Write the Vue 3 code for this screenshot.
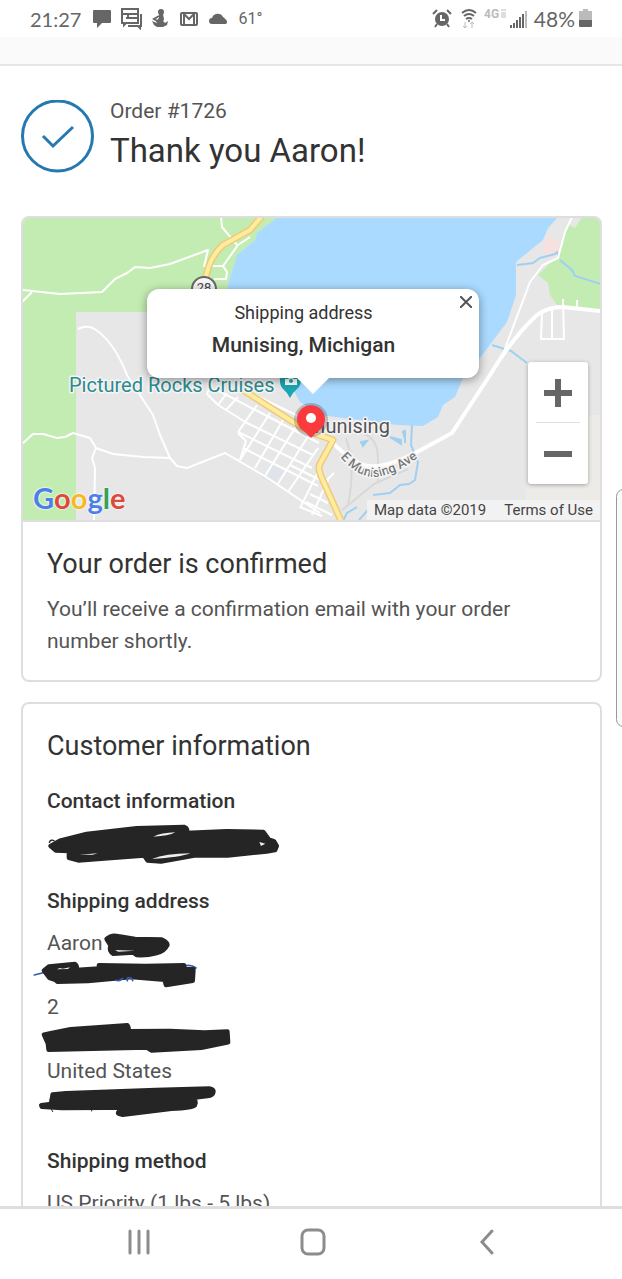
<script setup>
import {ref} from "vue";

const order = {
  number: 1726,
  name: 'Aaron',
  city: 'Munising, Michigan',
  method: 'US Priority (1 lbs - 5 lbs)',
}

const showPopup = ref(true)
</script>

<template>
  <div class="phone">
    <header class="status">
      <div class="status_group">
        <span class="status_time">21:27</span>
        <svg width="18" height="20" viewBox="0 0 18 20" fill="#666">
          <path d="M1 1h16q1 0 1 1v11q0 1-1 1H9l-5 5v-5H1q-1 0-1-1V2q0-1 1-1z"/>
        </svg>
        <svg width="21" height="22" viewBox="0 0 21 22" fill="none" stroke="#666" stroke-width="2">
          <path d="M1 1h16v14H5l-2 2v-2H1zM1 6h16M7 6v4M5 10h12"/>
          <path d="M20 6v12h-1v2l-2-2H7"/>
        </svg>
        <svg width="18" height="20" viewBox="0 0 18 20" fill="#666">
          <circle cx="9" cy="3" r="3"/>
          <path d="M7 5h4l1 5-2 6H6l-2-4 3-3z"/>
          <path d="M7 7l-5 3 5 3" fill="none" stroke="#666" stroke-width="2"/>
          <path d="M0 12l5 2h5l1-2 2 2 3-2-1 4-4 2H5l-3-2z"/>
        </svg>
        <svg width="18" height="20" viewBox="0 0 18 20" fill="none" stroke="#666" stroke-width="2">
          <rect x="1" y="4" width="16" height="12" rx="1"/>
          <path d="M4 16V5l5 5 5-5v11" stroke-width="2"/>
        </svg>
        <svg width="20" height="20" viewBox="0 0 20 20" fill="#666">
          <path d="M4 15a3 3 0 0 1 0-6 6 6 0 0 1 11-1q2 1 2 2a3 3 0 0 1 1 5z"/>
        </svg>
        <span class="status_temp">61°</span>
      </div>
      <div class="status_group status_right">
        <svg width="24" height="22" viewBox="0 0 24 22" fill="#666">
          <circle cx="10" cy="11" r="7"/>
          <path d="M1 6l4-4M15 2l4 4M5 16l-2 3M15 16l2 3" stroke="#666" stroke-width="2"/>
          <path d="M9 7v5h4" fill="none" stroke="#fff" stroke-width="2"/>
        </svg>
        <svg width="20" height="22" viewBox="0 0 20 22" fill="none" stroke="#666" stroke-width="2">
          <path d="M2 5q7-6 14 0M4 8q5-4 10 0M6 11q3-2 6 0"/>
          <circle cx="9" cy="13" r="1" fill="#666" stroke="none"/>
          <path d="M5 14v6M3 18l2 2 2-2M12 20v-6M10 16l2-2 2 2" stroke="#bbb" stroke-width="1"/>
        </svg>
        <svg width="22" height="22" viewBox="0 0 22 22" fill="#bbb">
          <text x="0" y="10" font-size="12" font-weight="700">4G</text>
          <path d="M17 2h5M17 5h5M17 7h5M17 9h5" stroke="#bbb"/>
        </svg>
        <svg width="20" height="22" viewBox="0 0 20 22" fill="#666">
          <path d="M0 17h2v3H0zM3 15h2v5H3zM6 12h2v8H6zM9 9h2v11H9zM12 6h2v14h-2z"/>
          <path d="M15 3h2v17h-2z" fill="#bbb"/>
        </svg>
        <span class="status_battery">48%</span>
        <svg width="13" height="20" viewBox="0 0 13 20">
          <path d="M4 0h5v2h4v9H0V2h4z" fill="#bbb"/>
          <path d="M0 11h13v6q0 1-1 1H1q-1 0-1-1z" fill="#666"/>
        </svg>
      </div>
    </header>

    <main class="page">
      <div class="strip"></div>
      <div class="greeting">
        <svg class="greeting_icon" viewBox="0 0 73 73" fill="none" stroke="#2678b0" stroke-width="3">
          <circle cx="36.5" cy="36" r="35"/>
          <path d="M22 36l10 10 20-19"/>
        </svg>
        <div>
          <div class="greeting_order">Order #{{ order.number }}</div>
          <h1 class="greeting_title">Thank you {{ order.name }}!</h1>
        </div>
      </div>

      <section class="card">
        <div class="map">
          <svg class="map_canvas" viewBox="23 218 577 302" preserveAspectRatio="xMidYMid slice">
            <rect x="-300" y="100" width="1300" height="500" fill="#e7e7e7"/>
            <path d="M-300 100H300V217L278 217 257 233 255 240 237 255 230 278 227 288 240 312H76V600H-300z" fill="#c3ecb2"/>
            <path d="M278 217L257 233 255 240 237 255 230 278 227 288 250 340 285 375 300 402 320 415 343 418 377 422 397 425 423 426 438 417 443 405 455 397 463 378 480 358 507 322 516 295 516 262 543 240 548 228 558 217z" fill="#aadaff"/>
            <path d="M573 217L565 232 558 258 550 263 538 275 548 283 550 295 557 305 603 312V217H582L575 228 568 224z" fill="#c3ecb2"/>
            <path d="M543 242l6-6 11 7-2 13-13 0z" fill="#f7e1df"/>
            <path d="M586 415h14v85h-74v-15h60z" fill="#edebe8"/>
            <path d="M262 478l8-14 15 8-8 14z" fill="#dfe4ea"/>

            <g fill="none" stroke="#9fd0f2" stroke-width="2">
              <path d="M517 265l16-2 7-5 15-4 2-2 1 3M560 260l12 10 3 6 26 8M492 345l19 6 16 12"/>
              <path d="M412 425l-1 20 7 17-3 18-6 4-9 1-10 8-17 2M357 507l-10 6-4 8M368 510l-9 10"/>
              <path d="M361 442l6-1-4 5zM390 437l11 3v4zM402 432l3-1v12" fill="#9fd0f2"/>
            </g>

            <g fill="none" stroke="#d8d8d8" stroke-width="2">
              <path d="M364 434q14 5 14 25v24M342 510l32-26 34-15M346 438q10 30 2 66"/>
            </g>

            <g fill="none" stroke="#fff" stroke-width="2" stroke-linejoin="round">
              <path d="M-10 290H23l37 4 42-2 13-13 12-6 8-6 15 1 20-4 38-14-4 17M32 292l-10 10M221 217l1 10 15 18M250 237l-12 8-15 21h-10M223 266l4 6-1 7h-12"/>
              <path d="M78 329q10-5 18 1 18 12 31 45l26 40 7 20 10 23"/>
              <path d="M-10 455L23 443l10-9h10l14 4 8-1 8-4 17 5 6 10 17 6 30 3 27 1 7 8 10 2 38-15 38 22 57 38M96 448l-4 10 3 10-1 53"/>
              <path d="M210 386l-3 8 11 11 29 18 66 32M215 389l104 54M238 432l74 36M243 448l75 38M238 433l8 8-6 19M290 465l34 17"/>
              <path d="M227 393l-9 12M238 397l-12 13M257 405l-19 27M270 413l-30 47M283 420l-28 48M295 428l-30 48M307 438l-30 47M318 448l-30 44M320 468l-20 40M300 507l22 9M334 473l-8 8M310 494l18 9M306 502l26 13M328 480l-16 35M255 395l45 22"/>
              <path d="M572 217l-7 15-7 26-15 7-13 17-23 61-3 9M542 312l-1 27h23l-1-40M552 309v30M577 300v8"/>
            </g>
            <path d="M601 311l-38-4q-15 0-26 8-25 23-47 60l-38 58-35 19q-42 22-60 10-14-8-27-22" fill="none" stroke="#fff" stroke-width="4"/>

            <g fill="none" stroke-linejoin="round">
              <path d="M262 216l-12 14-27 15q-15 13-18 38M235 385l58 37 20 11 20 7-12 22q-4 5 0 14l21 47" stroke="#efca78" stroke-width="7"/>
              <path d="M262 216l-12 14-27 15q-15 13-18 38M235 385l58 37 20 11 20 7-12 22q-4 5 0 14l21 47" stroke="#ffec9f" stroke-width="4"/>
            </g>

            <circle cx="204" cy="289" r="12" fill="#f5f5f5" stroke="#666" stroke-width="2"/>
            <text x="204" y="292" font-size="13" text-anchor="middle" fill="#444">28</text>

            <path d="M280 376h21q1 9-4 13-4 3-7 9-3-6-7-9-4-4-3-13z" fill="#1aa6b2"/>
            <path d="M285 379h3l2-2 4 2h3v6h-12z" fill="#fff"/>
            <circle cx="291" cy="381" r="2" fill="#1aa6b2"/>

            <g class="map_labels">
              <text x="69" y="392" font-size="20" fill="#2d8a8f">Pictured Rocks Cruises</text>
              <text x="308" y="433" font-size="20" fill="#555">Munising</text>
              <path id="ave" d="M340 457q22 25 42 19 18-4 38-20" fill="none" stroke="none"/>
              <text font-size="13" font-weight="500" fill="#777"><textPath href="#ave">E Munising Ave</textPath></text>
            </g>

            <ellipse cx="311" cy="420" rx="17" ry="17" fill="#000" opacity="0.2"/>
            <path d="M311 438q-4-5-10-9a14 14 0 1 1 20 0q-6 4-10 9z" fill="#fa3a3d"/>
            <circle cx="311" cy="418" r="5" fill="#fff"/>
          </svg>

          <a class="map_logo" href="#" aria-label="Google">
            <span class="blue">G</span><span class="red">o</span><span class="yellow">o</span><span class="blue">g</span><span class="green">l</span><span class="red">e</span>
          </a>

          <div v-if="showPopup" class="popup">
            <p class="popup_label">Shipping address</p>
            <p class="popup_city">{{ order.city }}</p>
            <button class="popup_close" aria-label="Close" @click="showPopup = false">
              <svg width="12" height="12" viewBox="0 0 12 12" stroke="#555" stroke-width="2">
                <path d="M0 0l12 12M12 0L0 12"/>
              </svg>
            </button>
          </div>

          <div class="zoom">
            <button class="zoom_button" aria-label="Zoom in">
              <svg width="28" height="28" viewBox="0 0 28 28" fill="#666"><path d="M11 0h6v11h11v6H17v11h-6V17H0v-6h11z"/></svg>
            </button>
            <button class="zoom_button" aria-label="Zoom out">
              <svg width="28" height="28" viewBox="0 0 28 28" fill="#666"><path d="M0 11h28v6H0z"/></svg>
            </button>
          </div>

          <div class="credits">
            <span>Map data ©2019</span>
            <a href="#">Terms of Use</a>
          </div>
        </div>
        <div class="card_body">
          <h2 class="card_title">Your order is confirmed</h2>
          <p class="card_text">You’ll receive a confirmation email with your order number shortly.</p>
        </div>
      </section>

      <section class="card">
        <div class="card_body">
          <h2 class="card_title">Customer information</h2>
          <div class="info">
            <h3 class="info_title">Contact information</h3>
            <div class="row">
              <svg class="scribble" viewBox="81 51 780 96">
                <path d="M88 97q5-10 14-5" fill="none" stroke-width="4"/>
                <path d="M92 108l28-16 80-20 150-17 142-4q14 5 6 18l122-5 110 2 16 22 16 6 8 14-5 12-25 4-117 12-100 0-100 18-40-3-10-14-10 0-110 8-78 6-28-8 0-20-40-2z"/>
                <path class="hole" d="M400 80q24-12 66-13-20 11-66 13zM178 134l55-4-15 4zM396 147q40-16 115-17-30 12-115 17zM718 96l18 5-13 7z"/>
              </svg>
            </div>
          </div>
          <div class="info">
            <h3 class="info_title">Shipping address</h3>
            <div class="row">
              {{ order.name }}
              <svg class="scribble" viewBox="81 354 780 96">
                <path d="M260 390q15-14 35-8l50 8 80 2q18 8 17 16-10 20-32 24-30 8-60 6l-10-8-60 4q-14-8-8-24z"/>
                <path class="hole" d="M285 423l60 2-50 3z"/>
              </svg>
            </div>
            <div class="row">
              <svg class="scribble" viewBox="81 450 780 96">
                <path class="blue_mark" d="M43 498l35-9M496 470q20-3 32 7"/>
                <path d="M72 485l15-12 78-8q8 6 4 18l68-4 0-10 140 2 115-2 2 12 26 0-2 34-80 13-4-16-100-8-130 12-92 2-6-6-18-6z"/>
                <path class="blue_mark" d="M288 514q10 4 20-6M322 515v-8q14-4 16 8"/>
                <path class="hole" d="M110 481l10-4 8 2 22-4-6 5z"/>
              </svg>
            </div>
            <div class="row">2</div>
            <div class="row">
              <svg class="scribble" viewBox="81 72 780 96">
                <path d="M72 107l20-4 60-12 170-12q6 8 2 18l125-1 105 5 68-3 2 32-80 16-150 8-14-9-294 7-2-18z"/>
              </svg>
            </div>
            <div class="row">United States</div>
            <div class="row">
              <svg class="scribble" viewBox="81 264 780 96">
                <path d="M98 287l40-4 270-10 160-4q14 2 12 10-2 10-18 12l-48 6q18 6 10 22-6 8-70 10l-146 18q-18-2-12-8l88-14-258 2-60-4-2-4 30-4z"/>
                <path d="M96 288q-16 25 2 50M215 326v10" fill="none" stroke-width="3"/>
              </svg>
            </div>
          </div>
          <div class="info">
            <h3 class="info_title">Shipping method</h3>
            <div class="row">{{ order.method }}</div>
          </div>
        </div>
      </section>
    </main>
    <div class="edge_panel"></div>

    <nav class="nav">
      <button class="nav_button" aria-label="Recent apps">
        <svg width="28" height="28" viewBox="0 0 28 28" fill="none" stroke="#8c8c8c" stroke-width="3" stroke-linecap="round">
          <path d="M5 3v22M14 3v22M23 3v22"/>
        </svg>
      </button>
      <button class="nav_button" aria-label="Home">
        <svg width="28" height="28" viewBox="0 0 28 28" fill="none" stroke="#8c8c8c" stroke-width="3">
          <rect x="3" y="2" width="22" height="24" rx="6"/>
        </svg>
      </button>
      <button class="nav_button" aria-label="Back">
        <svg width="28" height="28" viewBox="0 0 28 28" fill="none" stroke="#8c8c8c" stroke-width="3" stroke-linecap="round">
          <path d="M19 3L9 14l10 11"/>
        </svg>
      </button>
    </nav>
  </div>
</template>

<style>
body {
  margin: 0;
  background-color: white;
}
</style>

<style scoped>
.phone {
  position: relative;
  display: flex;
  flex-direction: column;
  height: 100vh;
  overflow: hidden;
  font-family: Roboto, "Liberation Sans", sans-serif;
  font-size: 21px;
  color: #545454;
}

h1, h2, h3, p {
  margin: 0;
}

button {
  padding: 0;
  border: none;
  background: none;
  cursor: pointer;
}

.status {
  flex: none;
  display: flex;
  justify-content: space-between;
  align-items: center;
  height: 37px;
  padding: 0 30px;
  color: #666;
}

.status_group {
  display: flex;
  align-items: center;
  gap: 10px;
}

.status_right {
  gap: 4px;
}

.status_time {
  padding-right: 2px;
  font-family: Lato, sans-serif;
  font-size: 20px;
}

.status_battery {
  font-family: Lato, sans-serif;
  font-size: 21px;
}

.status_temp {
  font-size: 16px;
}

.page {
  flex: 1;
  min-height: 0;
  overflow: hidden;
}

.strip {
  height: 27px;
  background-color: #fafafa;
  border-bottom: 2px solid #e6e6e6;
}

.greeting {
  display: flex;
  align-items: center;
  gap: 16px;
  padding: 30px 21px 40px;
}

.greeting_icon {
  flex: none;
  width: 73px;
  height: 73px;
}

.greeting_order {
  line-height: 30px;
}

.greeting_title {
  font-size: 33px;
  line-height: 50px;
  font-weight: 400;
  color: #333;
}

.card {
  margin: 0 20px 20px 21px;
  border: 2px solid #dedede;
  border-radius: 8px;
  overflow: hidden;
}

.map {
  position: relative;
  height: 302px;
  overflow: hidden;
  border-bottom: 2px solid #dedede;
}

.map_canvas {
  display: block;
  width: 100%;
  height: 100%;
}

.map_labels text {
  paint-order: stroke;
  stroke: #f5f5f5;
  stroke-width: 3px;
  stroke-linejoin: round;
}

.map_logo {
  position: absolute;
  left: 10px;
  bottom: 4px;
  display: flex;
  font-family: Lato, sans-serif;
  font-size: 29px;
  line-height: 36px;
  font-weight: 700;
  text-decoration: none;
  text-shadow: 0 0 2px white, 0 0 2px white;
}

.blue {
  color: #4a80e8;
}

.red {
  color: #dc4a3d;
}

.yellow {
  color: #f5b921;
}

.green {
  color: #35a355;
}

.popup {
  position: absolute;
  top: 71px;
  left: 50%;
  width: 332px;
  height: 89px;
  box-sizing: border-box;
  padding-top: 8px;
  margin-left: -165px;
  border-radius: 12px;
  background-color: white;
  box-shadow: 0 2px 10px rgba(0, 0, 0, 0.4);
  text-align: center;
  color: #333;
}

.popup::after {
  content: "";
  position: absolute;
  top: 100%;
  left: 50%;
  margin-left: -16px;
  border: 16px solid transparent;
  border-top-color: white;
  border-bottom: none;
}

.popup_label {
  font-size: 18px;
  line-height: 32px;
  padding-right: 18px;
}

.popup_city {
  font-size: 21px;
  line-height: 32px;
  font-weight: 500;
  padding-right: 18px;
}

.popup_close {
  position: absolute;
  top: 7px;
  right: 7px;
  display: flex;
}

.zoom {
  position: absolute;
  right: 12px;
  bottom: 36px;
  border-radius: 3px;
  background-color: white;
  box-shadow: 0 1px 4px rgba(0, 0, 0, 0.3);
}

.zoom_button {
  display: flex;
  align-items: center;
  justify-content: center;
  width: 60px;
  height: 61px;
}

.zoom_button + .zoom_button::before {
  content: "";
  position: absolute;
  top: 60px;
  left: 8px;
  right: 8px;
  border-top: 1px solid #e0e0e0;
}

.credits {
  position: absolute;
  right: 0;
  bottom: 0;
  display: flex;
  gap: 18px;
  padding: 0 7px;
  background-color: rgba(245, 245, 245, 0.8);
  font-size: 15px;
  line-height: 20px;
  color: #444;
}

.credits a {
  color: inherit;
  text-decoration: none;
}

.card_body {
  padding: 25px 24px 23px;
}

.card_title {
  font-size: 27px;
  line-height: 34px;
  font-weight: 400;
  color: #333;
}

.card_text {
  margin-top: 12px;
  line-height: 32px;
}

.info {
  margin-top: 26px;
}

.card_title + .info {
  margin-top: 22px;
}

.info_title {
  margin-bottom: 10px;
  font-size: 21px;
  line-height: 32px;
  font-weight: 500;
  color: #333;
}

.row {
  position: relative;
  height: 32px;
  line-height: 32px;
}

.scribble {
  position: absolute;
  top: 0;
  left: 0;
  width: 260px;
  height: 32px;
  overflow: visible;
  fill: #252525;
  stroke: #252525;
  stroke-width: 14px;
  stroke-linejoin: round;
  stroke-linecap: round;
}

.scribble .hole {
  fill: #eee;
  stroke: none;
}

.scribble .blue_mark {
  fill: none;
  stroke: #3558b0;
  stroke-width: 5px;
}

.edge_panel {
  position: absolute;
  top: 489px;
  right: -9px;
  width: 13px;
  height: 236px;
  border: 1px solid #999;
  border-radius: 8px;
  background-color: #fafafa;
}

.nav {
  flex: none;
  display: flex;
  justify-content: center;
  align-items: center;
  gap: 146px;
  height: 66px;
  padding: 0 0 4px 4px;
  border-top: 3px solid #dedede;
}

.nav_button {
  display: flex;
}
</style>
